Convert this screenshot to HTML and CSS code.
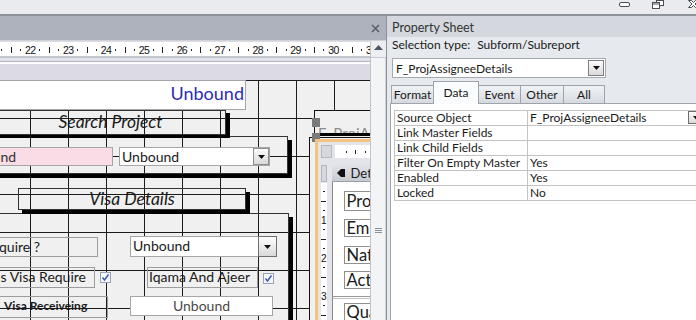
FILE: index.html
```html
<!DOCTYPE html>
<html lang="en">
<head>
    <meta charset="UTF-8">
    <title>F_Projects : Form</title>
    <link rel="stylesheet" href="styles.css">
</head>
<body>
<div class="app">
    <header class="titlebar">
        <div class="win-buttons">
            <svg class="win-min" width="11" height="7" viewBox="0 0 11 7"><rect x="0.5" y="2.5" width="10" height="4" rx="1.5" fill="#fff" stroke="#4a4d52"/></svg>
            <svg class="win-restore" width="12" height="9" viewBox="0 0 12 9"><rect x="4.5" y="0.5" width="7" height="5" fill="#fff" stroke="#4a4d52"/><rect x="0.5" y="2.5" width="7" height="6" fill="#fff" stroke="#4a4d52"/><line x1="1" y1="4" x2="7" y2="4" stroke="#4a4d52"/></svg>
            <svg class="win-close" width="12" height="9" viewBox="0 0 12 9"><path d="M0.5 0.5H3.5L5.5 2.5L7.5 0.5H10.5L7 4L10.5 7.5H7.5L5.5 5.5L3.5 7.5H0.5L4 4Z" fill="#fff" stroke="#4a4d52"/></svg>
        </div>
    </header>

    <div class="workarea">
        <section class="designer">
            <div class="doc-tab">
                <svg width="9" height="9" viewBox="0 0 9 9"><path d="M1 1L8 8M8 1L1 8" stroke="#555a61" stroke-width="1.4"/></svg>
            </div>
            <div class="designer-body">
                <div class="canvas-col">
                    <div class="ruler">
                        <div class="ruler-track">
                            <div class="cm"><span class="n">21</span><span class="q"><i class="dot"></i></span><span class="q"><i class="half"></i></span><span class="q"><i class="dot"></i></span></div>
                            <div class="cm"><span class="n">22</span><span class="q"><i class="dot"></i></span><span class="q"><i class="half"></i></span><span class="q"><i class="dot"></i></span></div>
                            <div class="cm"><span class="n">23</span><span class="q"><i class="dot"></i></span><span class="q"><i class="half"></i></span><span class="q"><i class="dot"></i></span></div>
                            <div class="cm"><span class="n">24</span><span class="q"><i class="dot"></i></span><span class="q"><i class="half"></i></span><span class="q"><i class="dot"></i></span></div>
                            <div class="cm"><span class="n">25</span><span class="q"><i class="dot"></i></span><span class="q"><i class="half"></i></span><span class="q"><i class="dot"></i></span></div>
                            <div class="cm"><span class="n">26</span><span class="q"><i class="dot"></i></span><span class="q"><i class="half"></i></span><span class="q"><i class="dot"></i></span></div>
                            <div class="cm"><span class="n">27</span><span class="q"><i class="dot"></i></span><span class="q"><i class="half"></i></span><span class="q"><i class="dot"></i></span></div>
                            <div class="cm"><span class="n">28</span><span class="q"><i class="dot"></i></span><span class="q"><i class="half"></i></span><span class="q"><i class="dot"></i></span></div>
                            <div class="cm"><span class="n">29</span><span class="q"><i class="dot"></i></span><span class="q"><i class="half"></i></span><span class="q"><i class="dot"></i></span></div>
                            <div class="cm"><span class="n">30</span><span class="q"><i class="dot"></i></span><span class="q"><i class="half"></i></span><span class="q"><i class="dot"></i></span></div>
                            <div class="cm"><span class="n">31</span><span class="q"><i class="dot"></i></span><span class="q"><i class="half"></i></span><span class="q"><i class="dot"></i></span></div>
                        </div>
                    </div>
                    <div class="section-band"></div>

                    <div class="canvas">
                        <div class="ctl textbox tb-header">Unbound</div>

                        <div class="ctl frame rect-search"></div>
                        <div class="ctl frame lbl-search">Search Project</div>
                        <div class="ctl textbox tb-pink">Unbound</div>
                        <div class="ctl combo cb-search">
                            <span class="combo-text">Unbound</span>
                            <span class="dd-btn"><svg width="7" height="4" viewBox="0 0 7 4"><path d="M0 0H7L3.5 4Z" fill="#111"/></svg></span>
                        </div>

                        <div class="ctl frame rect-visa"></div>
                        <div class="ctl frame lbl-visa">Visa Details</div>
                        <div class="ctl label lbl-require">Is Visa Require ?</div>
                        <div class="ctl combo cb-visa">
                            <span class="combo-text">Unbound</span>
                            <span class="dd-btn"><svg width="7" height="4" viewBox="0 0 7 4"><path d="M0 0H7L3.5 4Z" fill="#111"/></svg></span>
                        </div>
                        <div class="ctl label lbl-isvisa">Is Visa Require</div>
                        <svg class="ctl check chk-visa" width="11" height="11" viewBox="0 0 11 11"><rect x="0.5" y="0.5" width="10" height="10" fill="#f4f6fa" stroke="#9aa3b5"/><path d="M2.5 5.5L4.5 8L8.5 2.5" fill="none" stroke="#3a5cae" stroke-width="1.5"/></svg>
                        <div class="ctl label lbl-iqama">Iqama And Ajeer</div>
                        <svg class="ctl check chk-iqama" width="11" height="11" viewBox="0 0 11 11"><rect x="0.5" y="0.5" width="10" height="10" fill="#f4f6fa" stroke="#9aa3b5"/><path d="M2.5 5.5L4.5 8L8.5 2.5" fill="none" stroke="#3a5cae" stroke-width="1.5"/></svg>
                        <div class="ctl label lbl-receive">Visa Receiveing</div>
                        <div class="ctl textbox tb-receive">Unbound</div>

                        <div class="ctl sub-frame"></div>
                        <div class="ctl sub-head"></div>
                        <div class="ctl sub-caption">F_ProjAssigneeDetails</div>
                        <div class="ctl sub-caption-bar"></div>
                        <div class="ctl handle handle-top"></div>
                        <div class="ctl handle handle-mid"></div>

                        <div class="ctl subform">
                            <div class="sf-top">
                                <div class="sf-corner"></div>
                                <div class="sf-hruler">
                                    <span class="q"><i class="dot"></i></span><span class="q"><i class="half"></i></span><span class="q"><i class="dot"></i></span>
                                </div>
                            </div>
                            <div class="sf-body">
                                <div class="sf-vcol">
                                    <div class="sf-vcorner"></div>
                                    <div class="sf-vruler">
                                        <span class="vq"><i class="vdot"></i></span><span class="vq"><i class="vhalf"></i></span><span class="vq"><i class="vdot"></i></span><span class="vq">1</span>
                                        <span class="vq"><i class="vdot"></i></span><span class="vq"><i class="vhalf"></i></span><span class="vq"><i class="vdot"></i></span><span class="vq">2</span>
                                        <span class="vq"><i class="vdot"></i></span><span class="vq"><i class="vhalf"></i></span><span class="vq"><i class="vdot"></i></span><span class="vq">3</span>
                                        <span class="vq"><i class="vdot"></i></span><span class="vq"><i class="vhalf"></i></span>
                                    </div>
                                </div>
                                <div class="sf-detail">
                                    <div class="sf-section">
                                        <svg width="8" height="8" viewBox="0 0 8 8"><path d="M0 4L4 0H8V8H4Z" fill="#111"/></svg>
                                        <span>Detail</span>
                                    </div>
                                    <div class="sf-area">
                                        <div class="sf-field f-pro">Project Name</div>
                                        <div class="sf-field f-em">Employee</div>
                                        <div class="sf-field f-na">Nationality</div>
                                        <div class="sf-field f-act">Activity</div>
                                        <div class="sf-rule"></div>
                                        <div class="sf-field f-qu">Qualification</div>
                                    </div>
                                </div>
                            </div>
                        </div>
                    </div>
                </div>

                <div class="vscroll">
                    <div class="vscroll-up"><svg width="9" height="5" viewBox="0 0 9 5"><path d="M0 5L4.5 0L9 5Z" fill="#4f5663"/></svg></div>
                    <div class="vscroll-thumb"><span class="grip"></span></div>
                </div>
            </div>
        </section>

        <aside class="props">
            <div class="props-title">Property Sheet</div>
            <div class="props-sel"><span>Selection type:</span><span class="sel-value">Subform/Subreport</span></div>
            <div class="props-combo">
                <span class="combo-text">F_ProjAssigneeDetails</span>
                <span class="dd-btn"><svg width="7" height="4" viewBox="0 0 7 4"><path d="M0 0H7L3.5 4Z" fill="#111"/></svg></span>
            </div>
            <div class="props-tabs">
                <span class="tab tab-format">Format</span>
                <span class="tab tab-data active">Data</span>
                <span class="tab tab-event">Event</span>
                <span class="tab tab-other">Other</span>
                <span class="tab tab-all">All</span>
            </div>
            <div class="props-panel">
                <table class="props-grid">
                    <tr><td class="key">Source Object</td><td class="val"><span>F_ProjAssigneeDetails</span><span class="dd-btn small"><svg width="7" height="4" viewBox="0 0 7 4"><path d="M0 0H7L3.5 4Z" fill="#111"/></svg></span></td></tr>
                    <tr><td class="key">Link Master Fields</td><td class="val"></td></tr>
                    <tr><td class="key">Link Child Fields</td><td class="val"></td></tr>
                    <tr><td class="key">Filter On Empty Master</td><td class="val">Yes</td></tr>
                    <tr><td class="key">Enabled</td><td class="val">Yes</td></tr>
                    <tr><td class="key">Locked</td><td class="val">No</td></tr>
                </table>
            </div>
        </aside>
    </div>
</div>
</body>
</html>
```

FILE: styles.css
```css
* {
    box-sizing: border-box;
}
body {
    margin: 0;
    width: 696px;
    height: 320px;
    overflow: hidden;
    font-family: Lato, "Noto Sans", sans-serif;
    font-size: 12px;
    color: #1a1a1a;
    background-color: #e9ebee;
}
.app {
    width: 696px;
    height: 320px;
    display: flex;
    flex-direction: column;
}

/* window caption */
.titlebar {
    height: 16px;
    flex: none;
    background-color: #e9ebee;
    border-bottom: 2px solid #8e9299;
    display: flex;
    justify-content: flex-end;
}
.win-buttons {
    display: flex;
    align-items: flex-start;
    margin-right: -4px;
}
.win-min {
    margin-right: 22px;
}
.win-restore {
    margin-right: 24px;
}

.workarea {
    flex: 1;
    display: flex;
    min-height: 0;
}

/* design view */
.designer {
    width: 386px;
    display: flex;
    flex-direction: column;
}
.doc-tab {
    height: 25px;
    flex: none;
    background-color: #adb2bc;
    border-bottom: 1px solid #cfd2d8;
    display: flex;
    align-items: center;
    justify-content: flex-end;
    padding-right: 6px;
}
.designer-body {
    flex: 1;
    display: flex;
    min-height: 0;
}
.canvas-col {
    width: 370px;
    display: flex;
    flex-direction: column;
}
.ruler {
    height: 17px;
    flex: none;
    background-color: #fff;
    border-top: 1px solid #dcdee3;
    border-bottom: 2px solid #c3c6cc;
    overflow: hidden;
}
.ruler-track {
    display: flex;
    height: 100%;
    margin-left: -12.34px;
}
.cm {
    display: flex;
    flex: none;
    width: 37.9px;
    height: 100%;
}
.cm .n,
.q {
    flex: none;
    width: 9.475px;
    display: flex;
    justify-content: center;
    align-items: center;
}
.cm .n {
    font-family: "Liberation Sans", Arial, sans-serif;
    font-size: 10.5px;
    letter-spacing: -0.6px;
    color: #111;
    padding-top: 1px;
}
.dot {
    width: 1px;
    height: 2px;
    background-color: #222;
    margin-top: 2px;
}
.half {
    width: 1px;
    height: 6px;
    background-color: #222;
    margin-top: 1px;
}
.section-band {
    height: 22px;
    flex: none;
    background: linear-gradient(to bottom, #e2e2ea 0 3px, #b4b5be 3px 4px, #fff 4px 6px, #dcdbe4 6px);
}

/* form canvas with 1 cm grid */
.canvas {
    flex: 1;
    position: relative;
    overflow: hidden;
    background-color: #f0f0f0;
    background-image: linear-gradient(to right, #1c1c1c 1px, transparent 1px), linear-gradient(to bottom, #1c1c1c 1px, transparent 1px);
    background-size: 38px 38px;
    background-position: 30px 0, 0 0;
    font-size: 14px;
}
.ctl {
    position: absolute;
    white-space: nowrap;
}
.textbox {
    background-color: #fff;
    border: 1px solid #a6a6a6;
    padding: 0 3px;
    overflow: hidden;
}
.label {
    border: 1px solid #9c9c9c;
    overflow: hidden;
}
.frame {
    border: 1px solid #333;
    text-align: center;
    font-style: italic;
}
.combo {
    display: flex;
    background-color: #fff;
    border: 1px solid #a6a6a6;
}
.combo .combo-text {
    flex: 1;
    padding-left: 2px;
}
.dd-btn {
    flex: none;
    display: flex;
    align-items: center;
    justify-content: center;
    border: 1px solid #8e8e8e;
    background: linear-gradient(to bottom, #fdfdfd, #d9d9d9);
}

.tb-header {
    left: -10px;
    top: 0;
    width: 256px;
    height: 30px;
    text-align: right;
    padding-right: 1px;
    color: #2d2db4;
    font-size: 18px;
    line-height: 24px;
}
.rect-search {
    left: -5px;
    top: 56px;
    width: 293px;
    height: 38px;
    box-shadow: 4px 4px 0 #000;
}
.lbl-search {
    left: -5px;
    top: 30px;
    width: 231px;
    height: 25px;
    box-shadow: 4px 3px 0 #000;
    font-size: 17.5px;
    line-height: 22px;
}
.tb-pink {
    left: -45px;
    top: 67px;
    width: 158px;
    height: 19px;
    background-color: #fadce7;
    line-height: 17px;
    color: #333;
}
.cb-search {
    left: 119px;
    top: 67px;
    width: 151px;
    height: 19px;
    line-height: 17px;
}
.cb-search .dd-btn {
    width: 16px;
    height: 17px;
}
.rect-visa {
    left: -5px;
    top: 133px;
    width: 294px;
    height: 220px;
    box-shadow: 4px 4px 0 #000;
}
.lbl-visa {
    left: 18px;
    top: 108px;
    width: 228px;
    height: 22px;
    box-shadow: 4px 4px 0 #000;
    font-size: 17.5px;
    line-height: 19px;
}
.lbl-require {
    left: -60px;
    top: 157px;
    width: 158px;
    height: 20px;
    text-align: right;
    padding-right: 60px;
    line-height: 17px;
}
.cb-visa {
    left: 130px;
    top: 156px;
    width: 147px;
    height: 21px;
    line-height: 18px;
}
.cb-visa .combo-text {
    padding-left: 2px;
}
.cb-visa .dd-btn {
    width: 19px;
    height: 21px;
    margin: -1px -1px -1px 0;
    border-color: #6f6f6f;
}
.lbl-isvisa {
    left: -60px;
    top: 187px;
    width: 155px;
    height: 21px;
    text-align: right;
    padding-right: 8px;
    line-height: 18px;
}
.lbl-iqama {
    left: 147px;
    top: 187px;
    width: 111px;
    height: 21px;
    padding-left: 1px;
    line-height: 18px;
}
.check {
    width: 11px;
    height: 11px;
}
.chk-visa {
    left: 100px;
    top: 192px;
}
.chk-iqama {
    left: 263px;
    top: 193px;
}
.lbl-receive {
    left: -1px;
    top: 216px;
    width: 109px;
    height: 22px;
    padding-left: 4px;
    font-size: 12px;
    font-weight: bold;
    line-height: 18px;
}
.tb-receive {
    left: 130px;
    top: 216px;
    width: 143px;
    height: 20px;
    text-align: center;
    color: #4a4a4a;
    line-height: 18px;
}

/* subform control */
.sub-frame {
    left: 309px;
    top: 57px;
    width: 61px;
    height: 183px;
    background-color: #f0f0f0;
    border-left: 1px solid #111;
    border-top: 1px solid #111;
}
.sub-head {
    left: 314px;
    top: 30px;
    width: 56px;
    height: 27px;
    background-color: #f0f0f0;
    border-left: 1px solid #111;
    border-top: 1px solid #111;
}
.sub-caption {
    left: 318px;
    top: 44px;
    width: 52px;
    height: 9px;
    overflow: hidden;
    color: #8d8d8d;
    font-size: 15px;
    line-height: 14px;
    padding-top: 2px;
}
.sub-caption-bar {
    left: 319px;
    top: 53px;
    width: 51px;
    height: 3px;
    background-color: #000;
}
.handle {
    left: 312px;
    width: 8px;
    height: 9px;
    background-color: #7a7a7a;
}
.handle-top {
    top: 38px;
}
.handle-mid {
    top: 53px;
}
.subform {
    left: 315px;
    top: 59px;
    width: 55px;
    height: 181px;
    border-top: 3px solid #f2c27e;
    border-left: 3px solid #f2c27e;
    background-color: #e3e5ea;
    overflow: hidden;
    display: flex;
    flex-direction: column;
}
.sf-top {
    display: flex;
    height: 13px;
    margin: 3px 0 0 3px;
    gap: 3px;
    flex: none;
}
.sf-corner,
.sf-vcorner {
    background-color: #d5d8df;
    border: 1px solid #b3b8c1;
}
.sf-corner {
    width: 14px;
}
.sf-hruler {
    flex: 1;
    display: flex;
    background-color: #fff;
    padding-left: 6.75px;
}
.sf-hruler .dot {
    margin-top: 1px;
}
.sf-hruler .half {
    height: 4px;
    margin-top: 1px;
}
.sf-body {
    flex: 1;
    display: flex;
    gap: 5px;
    margin: 7px 0 0 3px;
    min-height: 0;
}
.sf-vcol {
    width: 14px;
    display: flex;
    flex-direction: column;
}
.sf-vcorner {
    height: 17px;
    flex: none;
}
.sf-vruler {
    flex: 1;
    margin-top: 1px;
    background-color: #fff;
    padding-top: 3.75px;
    display: flex;
    flex-direction: column;
}
.vq {
    flex: none;
    height: 9.5px;
    display: flex;
    align-items: center;
    justify-content: center;
    font-family: "Liberation Sans", Arial, sans-serif;
    font-size: 10px;
    color: #111;
}
.vdot {
    width: 2px;
    height: 1px;
    background-color: #222;
}
.vhalf {
    width: 5px;
    height: 1px;
    background-color: #222;
}
.sf-detail {
    flex: 1;
    display: flex;
    flex-direction: column;
}
.sf-section {
    height: 17px;
    flex: none;
    display: flex;
    align-items: center;
    gap: 6px;
    padding-left: 5px;
    background: linear-gradient(to bottom, #e1e3e8, #c7cad1);
    border-bottom: 1px solid #999ea7;
    font-size: 13px;
    white-space: nowrap;
    overflow: hidden;
}
.sf-area {
    flex: 1;
    position: relative;
    background-color: #fff;
    border-left: 1px solid #8a8a8a;
}
.sf-field {
    position: absolute;
    left: 11px;
    width: 80px;
    height: 18px;
    border: 1px solid #8f8f8f;
    background-color: #fff;
    padding-left: 2px;
    line-height: 16px;
    font-size: 16.5px;
    white-space: nowrap;
    overflow: hidden;
}
.f-pro {
    top: 9px;
    height: 20px;
    line-height: 18px;
}
.f-em {
    top: 37px;
}
.f-na {
    top: 64px;
}
.f-act {
    top: 89px;
}
.f-qu {
    top: 121px;
}
.sf-rule {
    position: absolute;
    left: 0;
    right: 0;
    top: 114px;
    height: 3px;
    border-top: 1px solid #9a9a9a;
    border-bottom: 1px solid #c4c4c4;
}

/* vertical scrollbar */
.vscroll {
    width: 16px;
    display: flex;
    flex-direction: column;
    background-color: #eceef1;
    border-left: 1px solid #bfc3ca;
}
.vscroll-up {
    height: 17px;
    flex: none;
    display: flex;
    align-items: center;
    justify-content: center;
    border-bottom: 1px solid #c8ccd2;
    padding-bottom: 3px;
}
.vscroll-thumb {
    flex: 1;
    background-color: #f3f4f6;
    border-right: 1px solid #d0d3d8;
    padding-top: 170px;
    display: flex;
    justify-content: center;
}
.grip {
    width: 7px;
    height: 5px;
    background: linear-gradient(to bottom, #8b8f96 0 1px, transparent 1px 2px, #8b8f96 2px 3px, transparent 3px 4px, #8b8f96 4px 5px);
}

/* property sheet */
.props {
    flex: 1;
    display: flex;
    flex-direction: column;
    background-color: #e6e9ed;
    border-left: 1px solid #8c9199;
    overflow: hidden;
}
.props-title {
    height: 21px;
    flex: none;
    background-color: #d4d8de;
    padding-left: 5px;
    line-height: 23px;
    font-size: 12.5px;
    color: #333;
}
.props-sel {
    height: 16px;
    flex: none;
    padding-left: 5px;
    line-height: 16px;
}
.sel-value {
    margin-left: 7px;
}
.props-combo {
    flex: none;
    display: flex;
    align-items: center;
    width: 214px;
    height: 20px;
    margin: 5px 0 0 5px;
    background-color: #fff;
    border: 1px solid #a4a9b2;
}
.props-combo .combo-text {
    flex: 1;
    padding-left: 3px;
}
.props-combo .dd-btn {
    width: 16px;
    height: 16px;
    margin-right: 1px;
    border-color: #7d7d7d;
}
.props-tabs {
    flex: none;
    display: flex;
    align-items: flex-end;
    height: 22px;
    margin-top: 3px;
    padding-left: 4px;
    position: relative;
    z-index: 1;
}
.tab {
    height: 18px;
    display: flex;
    align-items: center;
    justify-content: center;
    border: 1px solid #9ea4ad;
    border-bottom: none;
    background: linear-gradient(to bottom, #f1f3f5, #d6dadf);
    margin-left: -1px;
}
.tab.active {
    height: 23px;
    margin-bottom: -1px;
    background: #fafbfc;
    padding-bottom: 2px;
}
.tab-format { width: 43px; margin-left: 0; }
.tab-data { width: 46px; }
.tab-event { width: 43px; }
.tab-other { width: 44px; }
.tab-all { width: 42px; }
.props-panel {
    flex: 1;
    margin-left: 3px;
    background-color: #fff;
    border-top: 1px solid #9ea4ad;
    border-left: 1px solid #9ea4ad;
    padding: 6px 0 0 3px;
    overflow: hidden;
}
.props-grid {
    border-collapse: collapse;
    width: 312px;
}
.props-grid td {
    height: 15px;
    padding: 0 0 0 2px;
    border: 1px solid #c3c3c3;
    line-height: 14px;
    white-space: nowrap;
}
.props-grid .key {
    width: 133px;
}
.val .dd-btn.small {
    float: right;
    width: 16px;
    height: 13px;
    margin-right: 1px;
    border-color: #6f6f6f;
}
```
